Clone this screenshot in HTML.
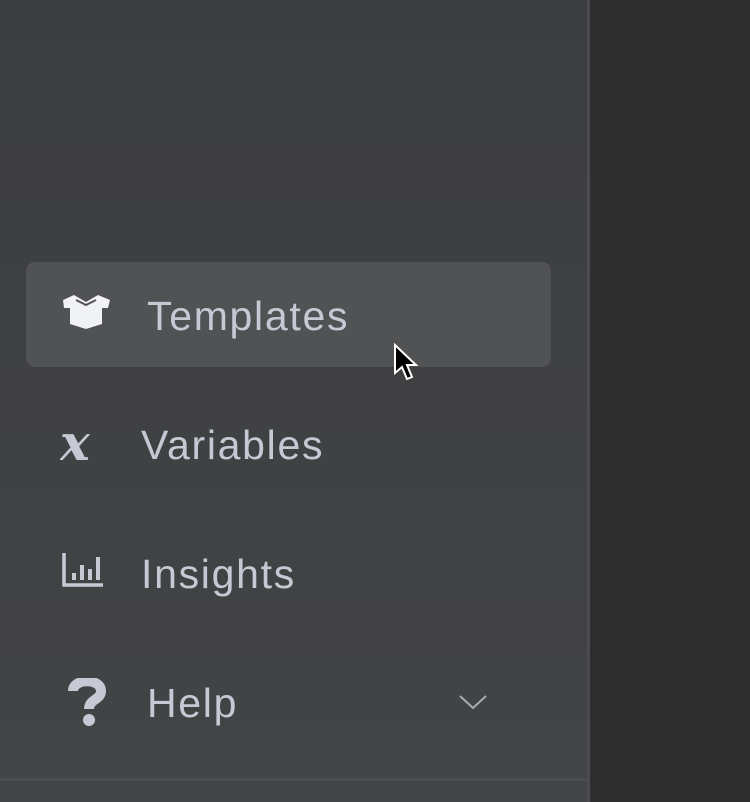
<!DOCTYPE html>
<html><head><style>
html,body{margin:0;padding:0;width:750px;height:802px;overflow:hidden;background:#2e2e2e;font-family:"Liberation Sans",sans-serif}
.side{position:absolute;left:0;top:0;width:587px;height:802px;background:linear-gradient(#3c3d3f,#434446);border-right:3px solid #4b4c4f}
.bot{position:absolute;left:0;top:778px;width:587px;height:3px;background:#4d4e51}
.hl{position:absolute;left:26px;top:262px;width:525px;height:105px;border-radius:9px;background:#515254}
.t{position:absolute;color:#c6c9d3;font-size:41px;line-height:40px;letter-spacing:1.7px}
svg{position:absolute}
</style></head><body>
<div class="side"></div>
<div class="bot"></div>
<div class="hl"></div>
<svg style="left:62px;top:294px" width="50" height="36" viewBox="0 0 50 36"><path d="M1 6 L12 1 L24 8 L36 1 L48 6 L46 14 L40 14 L40 30 L24 35 L8 30 L8 14 L2 14 Z" fill="#f1f2f6"/><path d="M14 6 L24 11 L34 6" stroke="#515254" stroke-width="2" fill="none"/></svg>
<div class="t" style="left:147px;top:296px">Templates</div>
<svg style="left:60px;top:420px" width="50" height="48" viewBox="0 0 50 48"><text x="0" y="40" font-family="DejaVu Serif" font-style="italic" font-weight="bold" font-size="50" fill="#c6c9d3">x</text></svg>
<div class="t" style="left:141px;top:425px">Variables</div>
<svg style="left:62px;top:553px" width="42" height="36" viewBox="0 0 42 36"><path d="M2 0 V32 H41" stroke="#c6c9d3" stroke-width="3.5" fill="none"/><rect x="10" y="20" width="4" height="7" fill="#c6c9d3"/><rect x="18" y="12" width="4" height="15" fill="#c6c9d3"/><rect x="26" y="16" width="4" height="11" fill="#c6c9d3"/><rect x="34" y="4" width="4" height="23" fill="#c6c9d3"/></svg>
<div class="t" style="left:141px;top:554px">Insights</div>
<svg style="left:68px;top:678px" width="40" height="48" viewBox="0 0 40 48"><path d="M5 13 C5 0 33 0 33 13 C33 22 21 21 21 31" stroke="#c6c9d3" stroke-width="10" fill="none"/><circle cx="21" cy="42" r="6" fill="#c6c9d3"/></svg>
<div class="t" style="left:147px;top:683px">Help</div>
<svg style="left:459px;top:694px" width="28" height="16" viewBox="0 0 28 16"><path d="M1 2 L14 14 L27 2" stroke="#a7abb4" stroke-width="2" fill="none"/></svg>
<svg style="left:393px;top:343px" width="26" height="38" viewBox="0 0 26 38"><path d="M2 2 V30 L9 24 L14 36 L19 34 L14 22 L23 22 Z" fill="#000" stroke="#fff" stroke-width="2"/></svg>
</body></html>
